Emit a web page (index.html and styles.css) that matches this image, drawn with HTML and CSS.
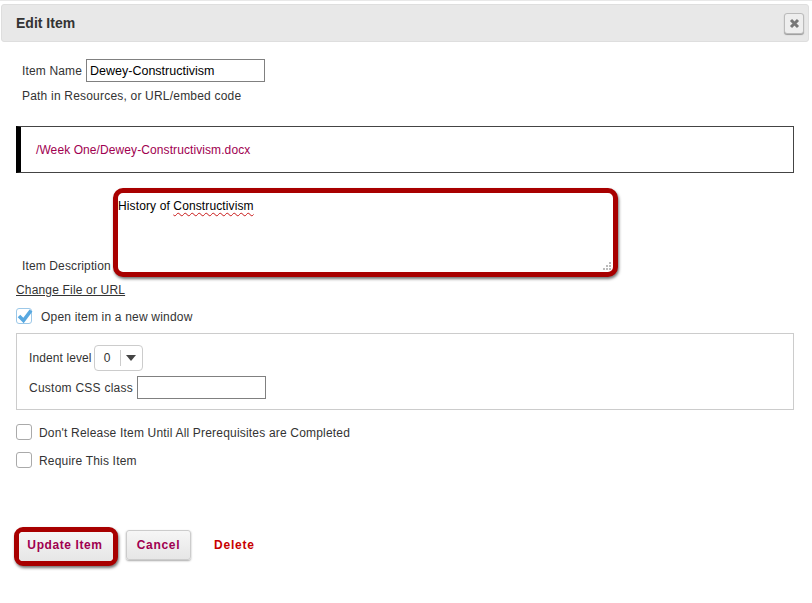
FILE: index.html
```html
<!DOCTYPE html>
<html lang="en">
<head>
<meta charset="utf-8">
<title>Edit Item</title>
<link rel="stylesheet" href="styles.css">
</head>
<body>
<div class="topline"></div>
<header class="titlebar">
  <h1 class="title">Edit Item</h1>
  <button class="close" type="button" aria-label="Close">
    <svg width="11" height="11" viewBox="0 0 11 11"><path d="M2 2 L9 9 M9 2 L2 9" stroke="#777" stroke-width="3" fill="none"/></svg>
  </button>
</header>
<main class="form">
  <div class="name-row">
    <label class="label">Item Name</label>
    <div class="field name-field">Dewey-Constructivism</div>
  </div>
  <div class="path-label">Path in Resources, or URL/embed code</div>
  <div class="path-box">/Week One/Dewey-Constructivism.docx</div>
  <div class="desc-row">
    <label class="label desc-label">Item Description</label>
    <div class="highlight desc-box">
      <span>History of <span class="misspelled">Constructivism</span></span>
      <svg class="grip" width="9" height="9" viewBox="0 0 9 9"><path fill="#bbb" d="M6 0h2v2H6zM3 3h2v2H3zM6 3h2v2H6zM0 6h2v2H0zM3 6h2v2H3zM6 6h2v2H6z"/></svg>
    </div>
  </div>
  <a class="change-link" href="#">Change File or URL</a>
  <div class="check-row first-check">
    <span class="checkbox checked">
      <svg width="18" height="16" viewBox="0 0 18 16"><path d="M3 8 L7.5 12.5 L15 2.5" stroke="#58a8e0" stroke-width="3.6" fill="none"/></svg>
    </span>
    <span class="check-text wide low">Open item in a new window</span>
  </div>
  <section class="options">
    <div class="indent-row">
      <span class="label-plain">Indent level</span>
      <div class="select">
        <span class="select-value">0</span>
        <span class="select-arrow"></span>
      </div>
    </div>
    <div class="css-row">
      <span class="label-plain">Custom CSS class</span>
      <div class="field css-field"></div>
    </div>
  </section>
  <div class="check-row prereq">
    <span class="checkbox"></span>
    <span class="check-text low">Don't Release Item Until All Prerequisites are Completed</span>
  </div>
  <div class="check-row require">
    <span class="checkbox"></span>
    <span class="check-text low">Require This Item</span>
  </div>
  <div class="actions">
    <div class="highlight update-wrap"><button class="btn update" type="button">Update Item</button></div>
    <button class="btn cancel" type="button">Cancel</button>
    <a class="delete" href="#">Delete</a>
  </div>
</main>
</body>
</html>
```
FILE: styles.css
```css
* { box-sizing: border-box; }
html, body { margin: 0; padding: 0; background: #fff; }
body {
  width: 812px;
  height: 603px;
  overflow: hidden;
  font-family: "Liberation Sans", Arial, sans-serif;
  font-size: 12px;
  color: #333;
  letter-spacing: 0.15px;
}
.topline { height: 1px; background: #e8e8e8; margin-bottom: 3px; }
.titlebar {
  height: 38px;
  margin: 0 3px 0 1px;
  background: #e8e8e8;
  border: 1px solid #dedede;
  border-radius: 3px;
  display: flex;
  align-items: center;
  justify-content: space-between;
  padding: 0 4px 0 14px;
}
.title { margin: 0; font-size: 14px; font-weight: bold; color: #333; letter-spacing: 0; }
.close {
  width: 20px;
  height: 21px;
  padding: 0;
  margin-top: 1px;
  background: #eee;
  border: 1px solid #bbb;
  border-radius: 3px;
  box-shadow: 0 1px 1px #999;
  display: flex;
  align-items: center;
  justify-content: center;
}
.form { padding: 0 18px 0 16px; }
.name-row { display: flex; align-items: center; margin: 17px 0 0 6px; }
.label { color: #333; }
.field {
  border: 1px solid #808080;
  background: #fff;
  height: 23px;
  color: #000;
}
.name-field {
  width: 179px;
  margin-left: 4px;
  padding: 3px 3px;
  line-height: 16px;
  font-size: 12.5px;
  letter-spacing: 0;
}
.path-label { margin: 7px 0 0 6px; line-height: 14px; letter-spacing: 0.2px; }
.path-box {
  margin-top: 23px;
  height: 47px;
  border: 1px solid #444;
  border-left: 5px solid #000;
  padding-left: 15px;
  line-height: 46px;
  color: #a00050;
  letter-spacing: 0.09px;
}
.desc-row { display: flex; align-items: flex-end; margin: 15px 0 0 6px; }
.desc-label { line-height: 14px; margin-bottom: 4px; width: 91px; flex: none; letter-spacing: 0.13px; }
.highlight {
  border: 5px solid #a80000;
  border-radius: 10px;
  box-shadow: 1px 2px 3px rgba(0, 0, 0, 0.55);
  background: #fff;
}
.desc-box {
  position: relative;
  width: 505px;
  height: 89px;
  padding: 6px 0 0 0;
  color: #000;
  line-height: 14px;
  letter-spacing: 0.12px;
}
.misspelled {
  text-decoration: underline wavy #c81818 1px;
  text-underline-offset: 2px;
}
.grip { position: absolute; right: 1px; bottom: 1px; }
.change-link {
  display: block;
  margin-top: 6px;
  color: #333;
  line-height: 14px;
  text-decoration: underline;
  width: max-content;
  letter-spacing: 0.17px;
}
.check-row { display: flex; align-items: center; height: 16px; }
.first-check { margin-top: 11px; }
.checkbox {
  width: 16px;
  height: 16px;
  border: 1px solid #aaa;
  border-radius: 3px;
  background: #fff;
  flex: none;
  display: block;
  position: relative;
}
.checkbox.checked { border-color: #9cc8e8; }
.checkbox svg { position: absolute; left: -1px; top: -1px; }
.check-text { margin-left: 7px; letter-spacing: 0.19px; }
.check-text.wide { margin-left: 9px; }
.check-text.low { padding-top: 2px; }
.options {
  margin-top: 9px;
  height: 77px;
  border: 1px solid #ccc;
  padding: 11px 0 0 12px;
}
.indent-row { display: flex; align-items: center; height: 26px; }
.label-plain { color: #333; }
.indent-row .label-plain { letter-spacing: 0.1px; }
.css-row .label-plain { letter-spacing: 0.25px; }
.select {
  margin-left: 2px;
  width: 49px;
  height: 26px;
  border: 1px solid #ccc;
  border-radius: 4px;
  display: flex;
  align-items: center;
}
.select-value {
  width: 26px;
  height: 16px;
  line-height: 16px;
  text-align: center;
  border-right: 1px solid #ccc;
  font-size: 12px;
}
.select-arrow {
  margin-left: 5px;
  width: 0;
  height: 0;
  border-left: 5.5px solid transparent;
  border-right: 5.5px solid transparent;
  border-top: 6px solid #444;
}
.css-row { display: flex; align-items: center; margin-top: 5px; }
.css-field { width: 129px; margin-left: 4px; height: 23px; }
.prereq { margin-top: 14px; }
.require { margin-top: 12px; }
.actions { display: flex; align-items: flex-start; margin: 59px 0 0 -2px; }
.btn {
  font-family: "Liberation Sans", Arial, sans-serif;
  font-size: 12px;
  font-weight: bold;
  color: #a00050;
  border: 1px solid #ccc;
  background: linear-gradient(#f6f6f6, #e6e6e6);
  padding: 0;
}
.update-wrap { width: 104px; height: 39px; border-radius: 9px; overflow: hidden; }
.update { width: 100%; height: 100%; border: 0; letter-spacing: 0.6px; padding: 0 2px 3px 0; }
.cancel {
  width: 65px;
  height: 30px;
  margin: 3px 0 0 8px;
  border-radius: 3px;
  box-shadow: 0 1px 2px #aaa;
  letter-spacing: 0.7px;
}
.delete {
  margin: 11px 0 0 23px;
  color: #c80000;
  font-weight: bold;
  letter-spacing: 0.8px;
  text-decoration: none;
}
```
